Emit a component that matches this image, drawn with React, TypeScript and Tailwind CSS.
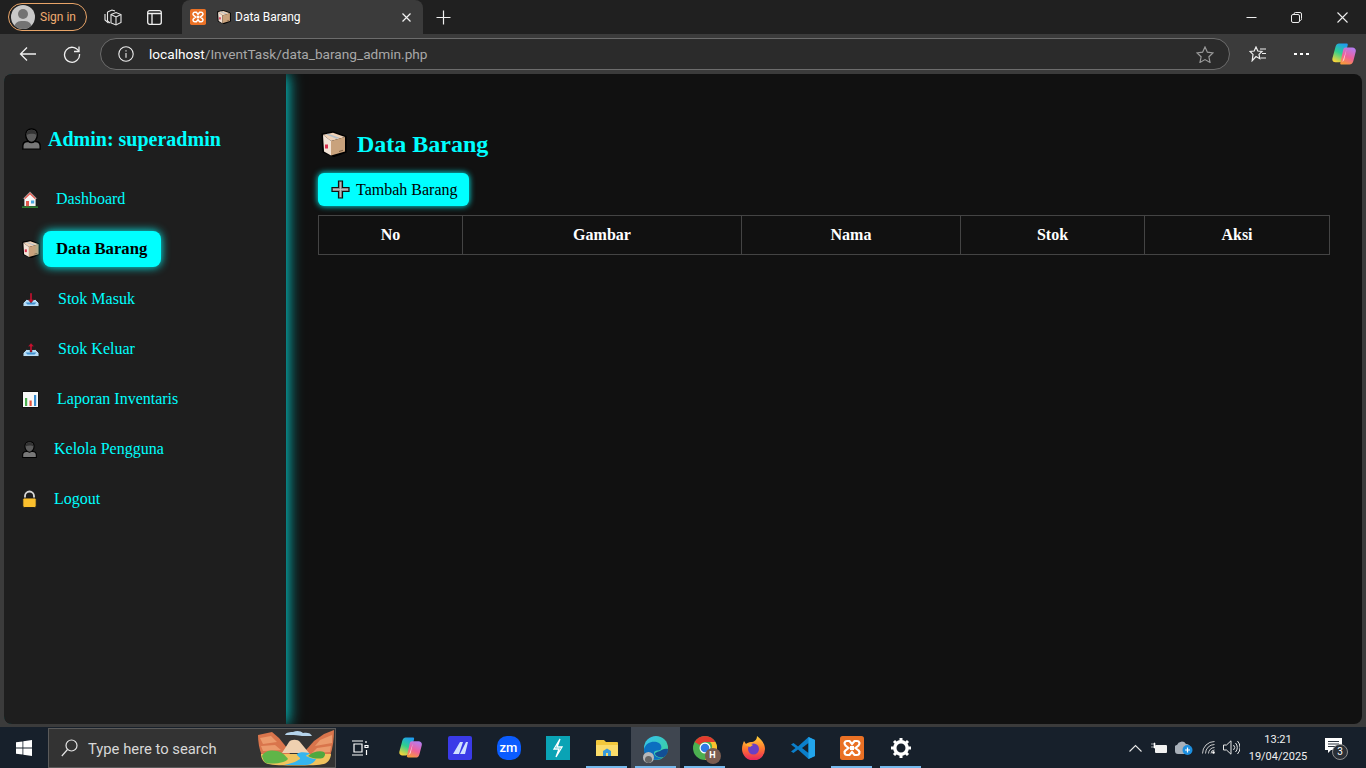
import type { ReactNode } from 'react';

const ui = 'font-["Roboto",sans-serif]';

function PersonEmoji({ w = 15, h = 17 }: { w?: number; h?: number }) {
  return (
    <svg width={w} height={h} viewBox="0 0 18 22" preserveAspectRatio="none">
      <path d="M.8 21.200V18c0-3 2-4.500 4.500-4.500h7.400c2.500 0 4.500 1.500 4.500 4.500v3.200z" fill="#787878" stroke="#000" strokeWidth="1.300" />
      <path d="M9 1c3.500 0 5.500 2.500 5.500 6S12 14.500 9 14.500 3.500 10.500 3.500 7 5.500 1 9 1z" fill="#5c5c5c" stroke="#000" strokeWidth="1.300" />
      <path d="M4.200 7C4.500 3 7 1.700 9 1.700S13.500 3 13.800 7C11.500 5 7 5.500 4.200 7z" fill="#333333" />
    </svg>
  );
}

function HouseEmoji() {
  return (
    <svg width="16" height="17" viewBox="0 0 16 17">
      <path d="M8 .5 15.500 8H14v7.500H2V8H.5z" fill="#f6f6f6" stroke="#1c1c1c" strokeWidth=".8" />
      <path d="M8 1.500 14 7.500 12.800 8 8 3.500 3.200 8 2 7.500z" fill="#e2574c" />
      <rect x="4" y="10" width="3" height="5.500" fill="#e2574c" />
      <rect x="9" y="9.500" width="3.200" height="3" fill="#4aa8e0" />
      <rect x="0" y="15.300" width="16" height="1.700" fill="#2e7d32" />
    </svg>
  );
}

function BoxEmoji({ size = 18 }: { size?: number }) {
  return (
    <svg width={size} height={size} viewBox="0 0 26 26">
      <path d="M1 3 12 .8 25 5.500v15.500L13 25.500 2 21z" fill="#000" stroke="#000" strokeWidth="1.200" />
      <path d="M2 3.800 12 1.800 24 6 10 10z" fill="#efd2b8" />
      <path d="M2 3.800 10 10v14.500L3 20.500z" fill="#f3e3d6" />
      <path d="M10 10 24 6v14.500l-14 4z" fill="#c9a27c" />
      <path d="m7 2.800 11.500 4-3 .9L4.800 3.300z" fill="#b4c0c9" />
      <rect x="4" y="13.500" width="3" height="4" fill="#d9304f" />
      <path d="M18 20l4-1.200v1l-4 1.200z" fill="#7b5f45" />
    </svg>
  );
}

function TrayEmoji({ up }: { up?: boolean }) {
  return (
    <svg width="18" height="15" viewBox="0 0 17 15">
      <path d="M.5 14.500V11L4 7.500h9l3.500 3.500v3.500z" fill="#b7dcf5" stroke="#1a1a1a" strokeWidth=".9" />
      <path d="M3 10.500h11l-2 2H5z" fill="#3f8fd0" />
      {up ? (
        <path d="M8.500 1 5.500 4.500h2V10h2V4.500h2z" fill="#c8102e" stroke="#222" strokeWidth=".4" />
      ) : (
        <path d="M8.500 11 5.500 7.500h2V1h2v6.500h2z" fill="#c8102e" stroke="#222" strokeWidth=".4" />
      )}
    </svg>
  );
}

function ChartEmoji() {
  return (
    <svg width="17" height="17" viewBox="0 0 17 17">
      <rect x=".5" y=".5" width="16" height="16" fill="#f8f8f8" stroke="#111" />
      <rect x="3" y="7" width="2.200" height="8" fill="#4caf50" />
      <rect x="7.500" y="9.500" width="2.200" height="5.500" fill="#e5533d" />
      <rect x="12" y="4" width="2.200" height="11" fill="#3b8ed0" />
    </svg>
  );
}

function LockEmoji() {
  return (
    <svg width="15" height="18" viewBox="0 0 15 18">
      <path d="M3 9V6a4.500 4.500 0 0 1 9 0v3" fill="none" stroke="#d8d8d8" strokeWidth="1.800" />
      <rect x=".8" y="8" width="13.400" height="9.500" rx="1.500" fill="#fbc02d" stroke="#1a1a1a" strokeWidth=".9" />
    </svg>
  );
}

function PlusEmoji() {
  return (
    <svg width="19" height="19" viewBox="0 0 19 19">
      <path d="M7.500 1h4v6.500H18v4h-6.500V18h-4v-6.500H1v-4h6.500z" fill="#8b8b8b" stroke="#111" strokeWidth="1.200" />
      <path d="M9.500 2v15M2 9.500h15" stroke="#c5c5c5" strokeWidth=".8" />
    </svg>
  );
}

function XamppIcon({ size = 16 }: { size?: number }) {
  return (
    <svg width={size} height={size} viewBox="0 0 24 24">
      <rect width="24" height="24" rx="2.500" fill="#ea7125" />
      <path
        d="M7 5h2.500l2.500 3 2.500-3H17a2.500 2.500 0 0 1 1.500 4.500L15.500 12l3 2.500A2.500 2.500 0 0 1 17 19h-2.500L12 16l-2.500 3H7a2.500 2.500 0 0 1-1.500-4.500l3-2.500-3-2.500A2.500 2.500 0 0 1 7 5z"
        fill="none"
        stroke="#fff"
        strokeWidth="2.200"
      />
      <rect x="10" y="10" width="4" height="4" fill="#fff" />
    </svg>
  );
}

function CopilotIcon({ size = 24 }: { size?: number }) {
  return (
    <svg width={size} height={size} viewBox="0 0 24 24">
      <defs>
        <linearGradient id={`cpa${size}`} x1="0.700" y1="0" x2="0.300" y2="1">
          <stop offset="0" stopColor="#1f9df0" />
          <stop offset=".5" stopColor="#2fcf8f" />
          <stop offset="1" stopColor="#f6d53a" />
        </linearGradient>
        <linearGradient id={`cpb${size}`} x1="0.700" y1="0" x2="0.300" y2="1">
          <stop offset="0" stopColor="#b67cf0" />
          <stop offset=".55" stopColor="#f0609a" />
          <stop offset="1" stopColor="#f89a3a" />
        </linearGradient>
      </defs>
      <path d="M7 1.500h7.500c1 0 1.500.8 1.200 1.800l-3.700 13c-.7 2.400-2.500 4-5 4H3.500C1 20.300-.2 18.300.5 16L3.600 4.500C4.200 2.700 5.300 1.500 7 1.500z" fill={`url(#cpa${size})`} />
      <path d="M13.500 5.500h6.800c2.700 0 4 2 3.400 4.300l-2.500 9.700c-.6 2-1.900 3-3.700 3H9.500c-1 0-1.500-.8-1.200-1.800l2.700-12c.4-2 1-3.200 2.500-3.200z" fill={`url(#cpb${size})`} />
      <path d="M14.500 7.500 11 18c-.3 1-.8 1.500-1.500 1.800 1.200-.2 2.300-.8 2.800-2.300z" fill="#ffe3ea" opacity=".8" />
    </svg>
  );
}

function Tab() {
  return (
    <div className="ml-[20px] flex h-[34px] w-[241px] items-center self-end rounded-t-[8px] bg-[#3b3b3b] pl-[8px] pr-[11px]">
      <XamppIcon />
      <span className="ml-[11px]">
        <BoxEmoji size={14} />
      </span>
      <span className={`ml-[4px] text-[12px] text-white ${ui}`}>Data Barang</span>
      <svg className="ml-auto" width="11" height="11" viewBox="0 0 11 11" stroke="#f2f2f2" strokeWidth="1.200">
        <path d="m1.500 1.500 8 8m0-8-8 8" />
      </svg>
    </div>
  );
}

function TitleBar() {
  return (
    <div className="flex h-[34px] shrink-0 items-center bg-[#202020]">
      <div className="ml-[8px] flex h-[28px] w-[79px] items-center rounded-full border border-[#e8a468] pl-[2px]">
        <span className="relative h-[24px] w-[24px] overflow-hidden rounded-full bg-[#c9c9c9]">
          <span className="absolute left-[7px] top-[4px] h-[10px] w-[10px] rounded-full bg-[#737373]" />
          <span className="absolute left-[3px] top-[16px] h-[14px] w-[18px] rounded-full bg-[#737373]" />
        </span>
        <span className={`ml-[5px] text-[12px] text-[#f0ac70] ${ui}`}>Sign in</span>
      </div>
      <svg className="ml-[17px]" width="18" height="17" viewBox="0 0 18 17" fill="none" stroke="#e8e8e8" strokeWidth="1.100">
        <path d="M1 5v6l3.500 3" />
        <path d="M3.500 3 8 1l3 1" />
        <path d="M3.500 3v9l2.500 2" />
        <path d="M7 5.500 12 3.500l5 2v8l-5 2.500-5-2z" />
        <path d="M12 8v8M7 5.500 12 8l5-2.500" />
      </svg>
      <svg className="ml-[25px]" width="15" height="15" viewBox="0 0 15 15" fill="none" stroke="#f0f0f0" strokeWidth="1.300">
        <rect x=".7" y=".7" width="13.600" height="13.600" rx="2" />
        <path d="M1 3.500h13M5 3.500V14" />
      </svg>
      <Tab />
      <svg className="ml-[13px]" width="15" height="15" viewBox="0 0 15 15" stroke="#f0f0f0" strokeWidth="1.200">
        <path d="M7.500 .5v14M.5 7.500h14" />
      </svg>
      <div className="ml-auto flex items-center">
        <svg width="11" height="11" viewBox="0 0 11 11" stroke="#eee" strokeWidth="1">
          <path d="M.5 5.500h10" />
        </svg>
        <svg className="ml-[34px]" width="11" height="11" viewBox="0 0 11 11" fill="none" stroke="#eee" strokeWidth="1">
          <rect x=".5" y="2.500" width="8" height="8" rx="1.500" />
          <path d="M3 2.500V2A1.500 1.500 0 0 1 4.500.5h4.500A1.500 1.500 0 0 1 10.500 2v4.500A1.500 1.500 0 0 1 9 8.500" />
        </svg>
        <svg className="ml-[35px] mr-[18px]" width="11" height="11" viewBox="0 0 11 11" stroke="#eee" strokeWidth="1.100">
          <path d="m.5.500 10 10m0-10-10 10" />
        </svg>
      </div>
    </div>
  );
}

function AddressBar() {
  return (
    <div className="flex h-[40px] shrink-0 items-center bg-[#3b3b3b]">
      <svg className="ml-[19px]" width="18" height="16" viewBox="0 0 18 16" fill="none" stroke="#f0f0f0" strokeWidth="1.300">
        <path d="M17 8H1.500M8 1.500 1.500 8 8 14.500" />
      </svg>
      <svg className="ml-[26px]" width="18" height="18" viewBox="0 0 18 18" fill="none" stroke="#f0f0f0" strokeWidth="1.300">
        <path d="M15.800 6.500A7.500 7.500 0 1 0 16.500 9" />
        <path d="M16 1.500v5h-5" />
      </svg>
      <div className="ml-[19px] flex h-[32px] w-[1130px] items-center rounded-full border border-[#6c6c6c] bg-[#2b2b2b] pl-[17px] pr-[15px]">
        <svg width="16" height="16" viewBox="0 0 16 16" fill="none" stroke="#ededed" strokeWidth="1.100">
          <circle cx="8" cy="8" r="7.200" />
          <path d="M8 7v4.800M8 4.200v1.300" />
        </svg>
        <span className={`ml-[15px] text-[13.650px] text-[#a8a8a8] ${ui}`}>
          <span className="text-white">localhost</span>/InventTask/data_barang_admin.php
        </span>
        <svg className="ml-auto" width="18" height="17" viewBox="0 0 18 17" fill="none" stroke="#9a9a9a" strokeWidth="1.200">
          <path d="m9 1 2.400 5.200 5.600.7-4.100 3.900 1.100 5.600L9 13.600l-5 2.800 1.100-5.600L1 6.900l5.600-.7z" />
        </svg>
      </div>
      <svg className="ml-[19px]" width="18" height="16" viewBox="0 0 18 16" fill="none" stroke="#f0f0f0" strokeWidth="1.200">
        <path d="M7 1 8.800 5 13 5.400 10 8.400l.8 4.300L7 10.500l-3.800 4.200.8-6.300-3-3L5.200 5z" />
        <path d="M11 3h6M13 7.500h4M11.500 12H17" />
      </svg>
      <span className="ml-[27px] flex gap-[3px]">
        <span className="h-[2px] w-[3px] bg-white" />
        <span className="h-[2px] w-[3px] bg-white" />
        <span className="h-[2px] w-[3px] bg-white" />
      </span>
      <span className="ml-[23px]">
        <CopilotIcon />
      </span>
    </div>
  );
}

const navItems: { label: string; icon: ReactNode; text: string; active?: boolean }[] = [
  { label: 'Dashboard', icon: <HouseEmoji />, text: 'pl-[13px]' },
  { label: 'Data Barang', icon: <BoxEmoji />, text: 'pl-[13px]', active: true },
  { label: 'Stok Masuk', icon: <TrayEmoji />, text: 'pl-[15px]' },
  { label: 'Stok Keluar', icon: <TrayEmoji up />, text: 'pl-[15px]' },
  { label: 'Laporan Inventaris', icon: <ChartEmoji />, text: 'pl-[14px]' },
  { label: 'Kelola Pengguna', icon: <PersonEmoji />, text: 'pl-[11px]' },
  { label: 'Logout', icon: <LockEmoji />, text: 'pl-[11px]' },
];

function Sidebar() {
  return (
    <aside className="z-10 flex w-[282px] shrink-0 flex-col bg-[#1e1e1e] pl-[18px] pt-[53px] shadow-[2px_0_14px_rgba(0,255,255,0.8)]">
      <h2 className="flex h-[24px] items-center text-[20px] font-bold text-[#00ffff]">
        <PersonEmoji w={19} h={22} />
        <span className="ml-[7px]">Admin: superadmin</span>
      </h2>
      <nav className="mt-[23px] flex flex-col">
        {navItems.map((item) => (
          <div key={item.label} className="flex h-[50px] items-center">
            <span className="flex w-[21px] shrink-0 items-center">{item.icon}</span>
            {item.active ? (
              <a className="flex h-[36px] w-[118px] shrink-0 items-center rounded-[8px] bg-[#00ffff] pl-[13px] text-[16.700px] font-bold text-black shadow-[0_0_10px_#00ffff]">
                {item.label}
              </a>
            ) : (
              <a className={`text-[16px] text-[#00ffff] ${item.text}`}>{item.label}</a>
            )}
          </div>
        ))}
      </nav>
    </aside>
  );
}

const columns = [
  { label: 'No', width: 'w-[144px]' },
  { label: 'Gambar', width: 'w-[279px]' },
  { label: 'Nama', width: 'w-[219px]' },
  { label: 'Stok', width: 'w-[184px]' },
  { label: 'Aksi', width: 'w-[185px]' },
];

function Main() {
  return (
    <main className="flex-1 pl-[32px] pr-[32px] pt-[53px]">
      <h1 className="flex h-[34px] items-center pl-[3px] text-[24px] font-bold text-[#00ffff]">
        <BoxEmoji size={26} />
        <span className="ml-[10px]">Data Barang</span>
      </h1>
      <button className="mt-[12px] flex h-[33px] w-[151px] items-center rounded-[6px] bg-[#00ffff] pl-[13px] text-[16px] text-black shadow-[0_0_6px_#00ffff]">
        <PlusEmoji />
        <span className="ml-[6px]">Tambah Barang</span>
      </button>
      <table className="mt-[9px] w-[1012px] table-fixed border-collapse text-[16px] text-white">
        <thead>
          <tr>
            {columns.map((col) => (
              <th key={col.label} className={`h-[39px] border border-[#444444] font-bold ${col.width}`}>
                {col.label}
              </th>
            ))}
          </tr>
        </thead>
      </table>
    </main>
  );
}

function Underlined({ on, bg, first, children }: { on?: boolean; bg?: boolean; first?: boolean; children: ReactNode }) {
  return (
    <div className={`relative flex h-[41px] items-center justify-center ${first ? 'w-[50px]' : 'w-[49px]'} ${bg ? 'bg-[#3f4650]' : ''}`}>
      {children}
      {on && <span className="absolute bottom-0 left-[4px] right-[4px] h-[2px] bg-[#76b9ed]" />}
    </div>
  );
}

function SearchScene() {
  return (
    <svg className="ml-auto mr-[1px]" width="76" height="38" viewBox="0 0 76 38">
      <path d="M0 6 14 3l7 6 8 10 4 8H4C1 20 0 12 0 6z" fill="#d9754c" />
      <path d="M2 9 13 7l6 6-14 2zM3 17l14-1 6 5-18 1z" fill="#eb9a6c" />
      <path d="M76 1 66 5 56 12l-8 9-3 6h27c3-8 4-18 4-26z" fill="#d9754c" />
      <path d="M74 6 62 11l-5 6 17-3zM73 17l-14 2-5 5 18-1z" fill="#eb9a6c" />
      <path d="M24 24 31 13c2-3 9-3 11 0l9 11z" fill="#efd0b0" />
      <path d="M27 6c1-3 6-3 8-3 4-2 8-1 10 1 4-1 8 0 9 3H44c-4-1-12-1-17-1z" fill="#b5d3ea" />
      <path d="M3 25h70c0 4-3 9-7 10-8 2-48 2-56 0-4-1-7-5-7-10z" fill="#f0c35e" />
      <path d="M4 27c3-6 10-6 15-5 5 1 9 5 11 8-4 5-18 5-22 4-2-1-3-4-4-7z" fill="#5fb548" />
      <path d="M50 27c4-4 12-6 16-4 2 2 1 4-1 6-4 1-10 1-15-2z" fill="#4fa83f" />
      <path d="M26 36c8-2 12-3 16-6 1-2-4-3-3-5 2-2 7-2 12-1 2 1-3 2-3 3 4 2 7 3 10 3-2 4-6 6-10 6z" fill="#35b5ef" />
    </svg>
  );
}

function Taskbar() {
  return (
    <div className="flex h-[41px] shrink-0 items-center bg-[#17202b]">
      <div className="flex w-[48px] justify-center">
        <svg width="16" height="16" viewBox="0 0 16 16" fill="#fff">
          <path d="M0 2.300 6.500 1.400v6.200H0zM7.300 1.300 16 0v7.600H7.300zM0 8.400h6.500v6.200L0 13.700zM7.300 8.400H16V16l-8.700-1.300z" />
        </svg>
      </div>
      <div className="flex h-[40px] w-[288px] items-center border border-[#5a5a5a] bg-[#333333]">
        <svg className="ml-[12px]" width="17" height="18" viewBox="0 0 17 18" fill="none" stroke="#e6e6e6" strokeWidth="1.200">
          <circle cx="10.500" cy="6.500" r="5.500" />
          <path d="M6.500 10.500.8 17" />
        </svg>
        <span className={`ml-[10px] mt-[3px] text-[14.800px] text-[#d8d8d8] ${ui}`}>Type here to search</span>
        <SearchScene />
      </div>
      <Underlined first>
        <svg className="mr-[2px]" width="18" height="16" viewBox="0 0 18 16" fill="none" stroke="#fff" strokeWidth="1.200">
          <path d="M1 1h11M1 15h11M3 4h8v8H3zM15 1v2" />
          <path d="M14 5.500h3v2h-3zM15.500 10v5" />
        </svg>
      </Underlined>
      <Underlined>
        <CopilotIcon size={23} />
      </Underlined>
      <Underlined>
        <svg width="24" height="24" viewBox="0 0 24 24">
          <rect width="24" height="24" rx="2" fill="#3a3ae8" />
          <path d="M5 18 12 6h3l-4 12zM12 18l6-12h2l-3 12z" fill="#cfe0ff" />
        </svg>
      </Underlined>
      <Underlined>
        <span className={`flex h-[24px] w-[24px] items-center justify-center rounded-[10px] bg-[#0b5cff] text-[13px] font-medium text-white ${ui}`}>
          zm
        </span>
      </Underlined>
      <Underlined>
        <svg width="24" height="24" viewBox="0 0 24 24">
          <rect width="24" height="24" fill="#0aa3b5" />
          <path d="M14 3 8 13h5l-3 8 6-10h-5z" fill="none" stroke="#fff" strokeWidth="1.300" />
        </svg>
      </Underlined>
      <Underlined on>
        <svg width="22" height="18" viewBox="0 0 22 18">
          <path d="M0 2a1 1 0 0 1 1-1h7l2 2h11a1 1 0 0 1 1 1v13H0z" fill="#f2c83c" />
          <path d="M0 6h22v11H0z" fill="#fbdc6a" />
          <path d="M7 17v-5l4-2.500 4 2.500v5h-3v-3h-2v3z" fill="#3a9ad9" />
        </svg>
      </Underlined>
      <Underlined on bg>
        <span className="relative">
          <svg width="24" height="24" viewBox="0 0 24 24" className="block">
            <defs>
              <linearGradient id="edgeA" x1="0" y1="0" x2="1" y2="1">
                <stop offset="0" stopColor="#35c1f1" />
                <stop offset="1" stopColor="#3dd28d" />
              </linearGradient>
            </defs>
            <circle cx="12" cy="12" r="12" fill="url(#edgeA)" />
            <path d="M0 13C2 6 10 4 15 7c3 2 3 6 1 7-2 1-6 0-6 3 0 3 4 5 8 5-5 3-12 2-15-1-2-2-3-5-3-8z" fill="#0c6fc0" />
            <path d="M24 13c0 3-1 6-4 8-3 1-8 0-9-3 0-2 3-2 5-3s4-3 8-2z" fill="#124f95" />
          </svg>
          <span className="absolute bottom-[-3px] left-[-1px] flex h-[11px] w-[11px] items-end justify-center overflow-hidden rounded-full bg-[#b8b8b8]">
            <span className="h-[7px] w-[7px] rounded-full bg-[#666666]" />
          </span>
        </span>
      </Underlined>
      <Underlined on>
        <span className="relative">
          <svg width="24" height="24" viewBox="0 0 24 24" className="block">
            <circle cx="12" cy="12" r="12" fill="#4caf50" />
            <path d="M12 0a12 12 0 0 1 10.400 6H12a6 6 0 0 0-5.200 3L1.700 6A12 12 0 0 1 12 0z" fill="#e33b2e" />
            <path d="M22.400 6A12 12 0 0 1 12 24l5.200-9a6 6 0 0 0-.2-9z" fill="#fbc02d" />
            <circle cx="12" cy="12" r="5.500" fill="#fff" />
            <circle cx="12" cy="12" r="4.300" fill="#2f7ae5" />
          </svg>
          <span className={`absolute bottom-[-4px] right-[-4px] flex h-[16px] w-[16px] items-center justify-center rounded-full bg-[#7a5c50] text-[9px] font-bold text-white ${ui}`}>
            H
          </span>
        </span>
      </Underlined>
      <Underlined>
        <svg width="23" height="24" viewBox="0 0 23 24">
          <defs>
            <linearGradient id="fxA" x1="0" y1="0" x2="0" y2="1">
              <stop offset="0" stopColor="#ffd43a" />
              <stop offset=".5" stopColor="#ff7a2e" />
              <stop offset="1" stopColor="#e8215f" />
            </linearGradient>
          </defs>
          <path d="M15 0c5 4 8 8 8 13a11.500 11.500 0 0 1-23 0c0-3 1-6 2-8l2 3c1-1 3-2 5-2 3 0 6-2 6-6z" fill="url(#fxA)" />
          <circle cx="11.500" cy="13" r="5.500" fill="#6b3fc4" />
          <path d="M3 9c3-2 6-1 8 0l-3 2z" fill="#ffb02e" />
        </svg>
      </Underlined>
      <Underlined>
        <svg width="24" height="24" viewBox="0 0 24 24">
          <path d="M17.500 1 24 4v16l-6.500 3L7 13.500 2.500 17 0 15.500 4.500 12 0 8.500 2.500 7 7 10.500z" fill="#0b7fcb" />
          <path d="M17.500 7 11 12l6.500 5z" fill="#17202b" />
          <path d="M17.500 1 24 4v16l-6.500 3z" fill="#22a5ec" />
        </svg>
      </Underlined>
      <Underlined on>
        <XamppIcon size={24} />
      </Underlined>
      <Underlined on>
        <svg width="20" height="20" viewBox="0 0 20 20">
          <circle cx="10" cy="10" r="6.200" fill="none" stroke="#fff" strokeWidth="3.400" />
          <path d="M10 0v20M0 10h20M3 3l14 14M17 3 3 17" stroke="#fff" strokeWidth="3" strokeDasharray="3.500 13 3.500 0" />
        </svg>
      </Underlined>

      <div className="ml-auto flex items-center">
        <svg width="13" height="8" viewBox="0 0 13 8" fill="none" stroke="#e8e8e8" strokeWidth="1.100">
          <path d="m.5 7.500 6-6 6 6" />
        </svg>
        <svg className="ml-[9px]" width="16" height="11" viewBox="0 0 16 11">
          <path d="M0 2h3M0 5h3M3 1h1v5H3z" stroke="#fff" fill="#fff" strokeWidth=".6" />
          <rect x="4" y="3" width="12" height="8" rx="1" fill="#f2f2f2" />
        </svg>
        <svg className="ml-[8px]" width="18" height="14" viewBox="0 0 18 14">
          <path d="M0 10a3.500 3.500 0 0 1 2-6 5 5 0 0 1 9-1 4 4 0 0 1 4 4v6H3a3 3 0 0 1-3-3z" fill="#a9b1ba" />
          <circle cx="12.500" cy="9" r="5" fill="#1c8fe0" />
          <path d="M10 9h5M12.500 6.500v5" stroke="#fff" strokeWidth="1.200" />
        </svg>
        <svg className="ml-[9px]" width="14" height="13" viewBox="0 0 14 13" fill="none" stroke="#dcdcdc" strokeWidth=".9">
          <path d="M.5 12.500a12 12 0 0 1 12-12M3.500 12.500a9 9 0 0 1 9-9M6.500 12.500a6 6 0 0 1 6-6M9 12.500a3.500 3.500 0 0 1 3.500-3.500" />
          <circle cx="11.500" cy="11.500" r="1" fill="#fff" />
        </svg>
        <svg className="ml-[7px]" width="17" height="15" viewBox="0 0 17 15" fill="none" stroke="#e8e8e8" strokeWidth="1">
          <path d="M.5 5h3L8 .8v13.400L3.500 10h-3zM10.500 5a3.500 3.500 0 0 1 0 5M12.500 3a6.500 6.500 0 0 1 0 9M14.500 1a9.500 9.500 0 0 1 0 13" />
        </svg>
        <div className={`ml-[1px] flex w-[74px] flex-col items-center text-[11px] leading-[17px] text-[#f0f0f0] ${ui}`}>
          <span>13:21</span>
          <span>19/04/2025</span>
        </div>
        <div className="relative ml-[10px] mr-[23px] h-[22px] w-[18px]">
          <svg width="18" height="16" viewBox="0 0 18 16" fill="#fff" className="absolute top-[1px]">
            <path d="M0 0h17v12H6l-3 3v-3H0z" />
            <path d="M3 3.500h11M3 6h11M3 8.500h11" stroke="#17202b" strokeWidth=".9" />
          </svg>
          <span className={`absolute left-[7px] top-[7px] flex h-[16px] w-[16px] items-center justify-center rounded-full border border-[#8f8f8f] bg-[#2a2f36] text-[10px] text-white ${ui}`}>
            3
          </span>
        </div>
      </div>
    </div>
  );
}

export default function App() {
  return (
    <div className='flex h-screen w-[1366px] flex-col overflow-hidden bg-[#3b3b3b] font-["Liberation_Serif",serif]'>
      <TitleBar />
      <AddressBar />
      <div className="mx-[4px] mb-[3px] flex min-h-0 flex-1 overflow-hidden rounded-[8px] bg-[#111111]">
        <Sidebar />
        <Main />
      </div>
      <Taskbar />
    </div>
  );
}
